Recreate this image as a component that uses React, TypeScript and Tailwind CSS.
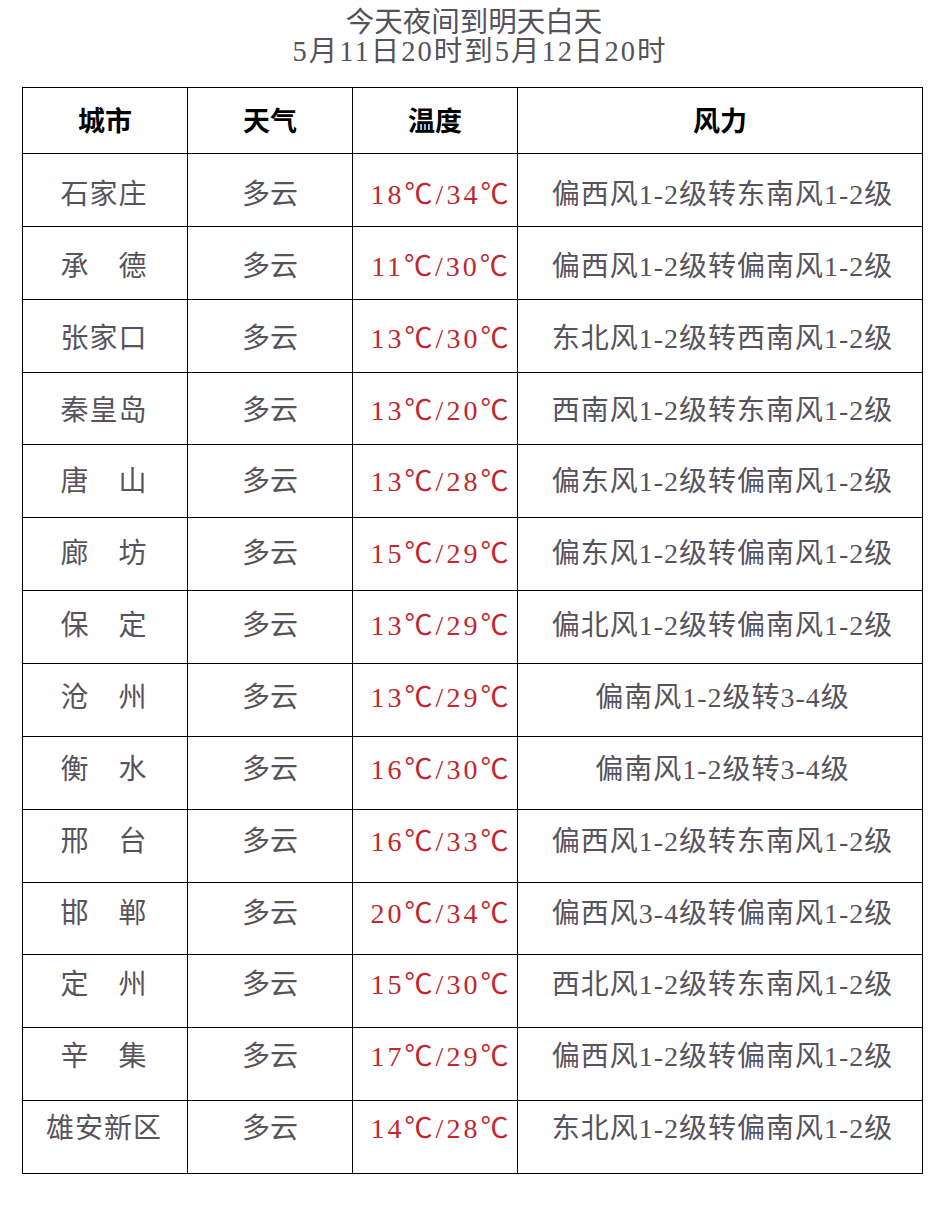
import React from "react";

const rows: [string, string, string][] = [
  ["石家庄", "18℃/34℃", "偏西风1-2级转东南风1-2级"],
  ["承　德", "11℃/30℃", "偏西风1-2级转偏南风1-2级"],
  ["张家口", "13℃/30℃", "东北风1-2级转西南风1-2级"],
  ["秦皇岛", "13℃/20℃", "西南风1-2级转东南风1-2级"],
  ["唐　山", "13℃/28℃", "偏东风1-2级转偏南风1-2级"],
  ["廊　坊", "15℃/29℃", "偏东风1-2级转偏南风1-2级"],
  ["保　定", "13℃/29℃", "偏北风1-2级转偏南风1-2级"],
  ["沧　州", "13℃/29℃", "偏南风1-2级转3-4级"],
  ["衡　水", "16℃/30℃", "偏南风1-2级转3-4级"],
  ["邢　台", "16℃/33℃", "偏西风1-2级转东南风1-2级"],
  ["邯　郸", "20℃/34℃", "偏西风3-4级转偏南风1-2级"],
  ["定　州", "15℃/30℃", "西北风1-2级转东南风1-2级"],
  ["辛　集", "17℃/29℃", "偏西风1-2级转偏南风1-2级"],
  ["雄安新区", "14℃/28℃", "东北风1-2级转偏南风1-2级"],
];

const font = {
  fontFamily: '"Liberation Serif", "Noto Sans CJK SC", serif',
};

export default function App() {
  return (
    <div className="w-[942px] h-[1218px] bg-white" style={font}>
      <div className="h-[87px] flex flex-col items-center pt-[8px] text-[#55525a] text-[28.5px] leading-[29px]">
        <div className="pl-[6px]">今天夜间到明天白天</div>
        <div className="pl-[18px] tracking-[2px]">5月11日20时到5月12日20时</div>
      </div>
      <div className="ml-[22px] w-[901px] border-l border-t border-black">
        <div className="grid grid-cols-[165px_165px_165px_405px] h-[66px] text-[27px] font-bold text-black">
          <div className="border-r border-b border-black flex items-center justify-center pt-[3px]">城市</div>
          <div className="border-r border-b border-black flex items-center justify-center pt-[3px]">天气</div>
          <div className="border-r border-b border-black flex items-center justify-center pt-[3px]">温度</div>
          <div className="border-r border-b border-black flex items-center justify-center pt-[3px]">风力</div>
        </div>
        {rows.map(([city, temp, wind], i) => {
          const shift = 5 - i;
          return (
            <div
              key={i}
              className="grid grid-cols-[165px_165px_165px_405px] h-[72.86px] text-[28px] text-[#57535d]"
            >
              <div className="border-r border-b border-black flex items-center justify-center pr-[2px]">
                <span className="tracking-[1px]" style={{ transform: `translateY(${shift}px)` }}>{city}</span>
              </div>
              <div className="border-r border-b border-black flex items-center justify-center">
                <span style={{ transform: `translateY(${shift}px)` }}>多云</span>
              </div>
              <div className="border-r border-b border-black flex items-center justify-center pl-[12px] text-[#c1272d]">
                <span className="whitespace-nowrap tracking-[3px]" style={{ transform: `translateY(${shift}px)` }}>{temp}</span>
              </div>
              <div className="border-r border-b border-black flex items-center justify-center pl-[5px]">
                <span className="whitespace-nowrap tracking-[1px]" style={{ transform: `translateY(${shift}px)` }}>{wind}</span>
              </div>
            </div>
          );
        })}
      </div>
    </div>
  );
}
